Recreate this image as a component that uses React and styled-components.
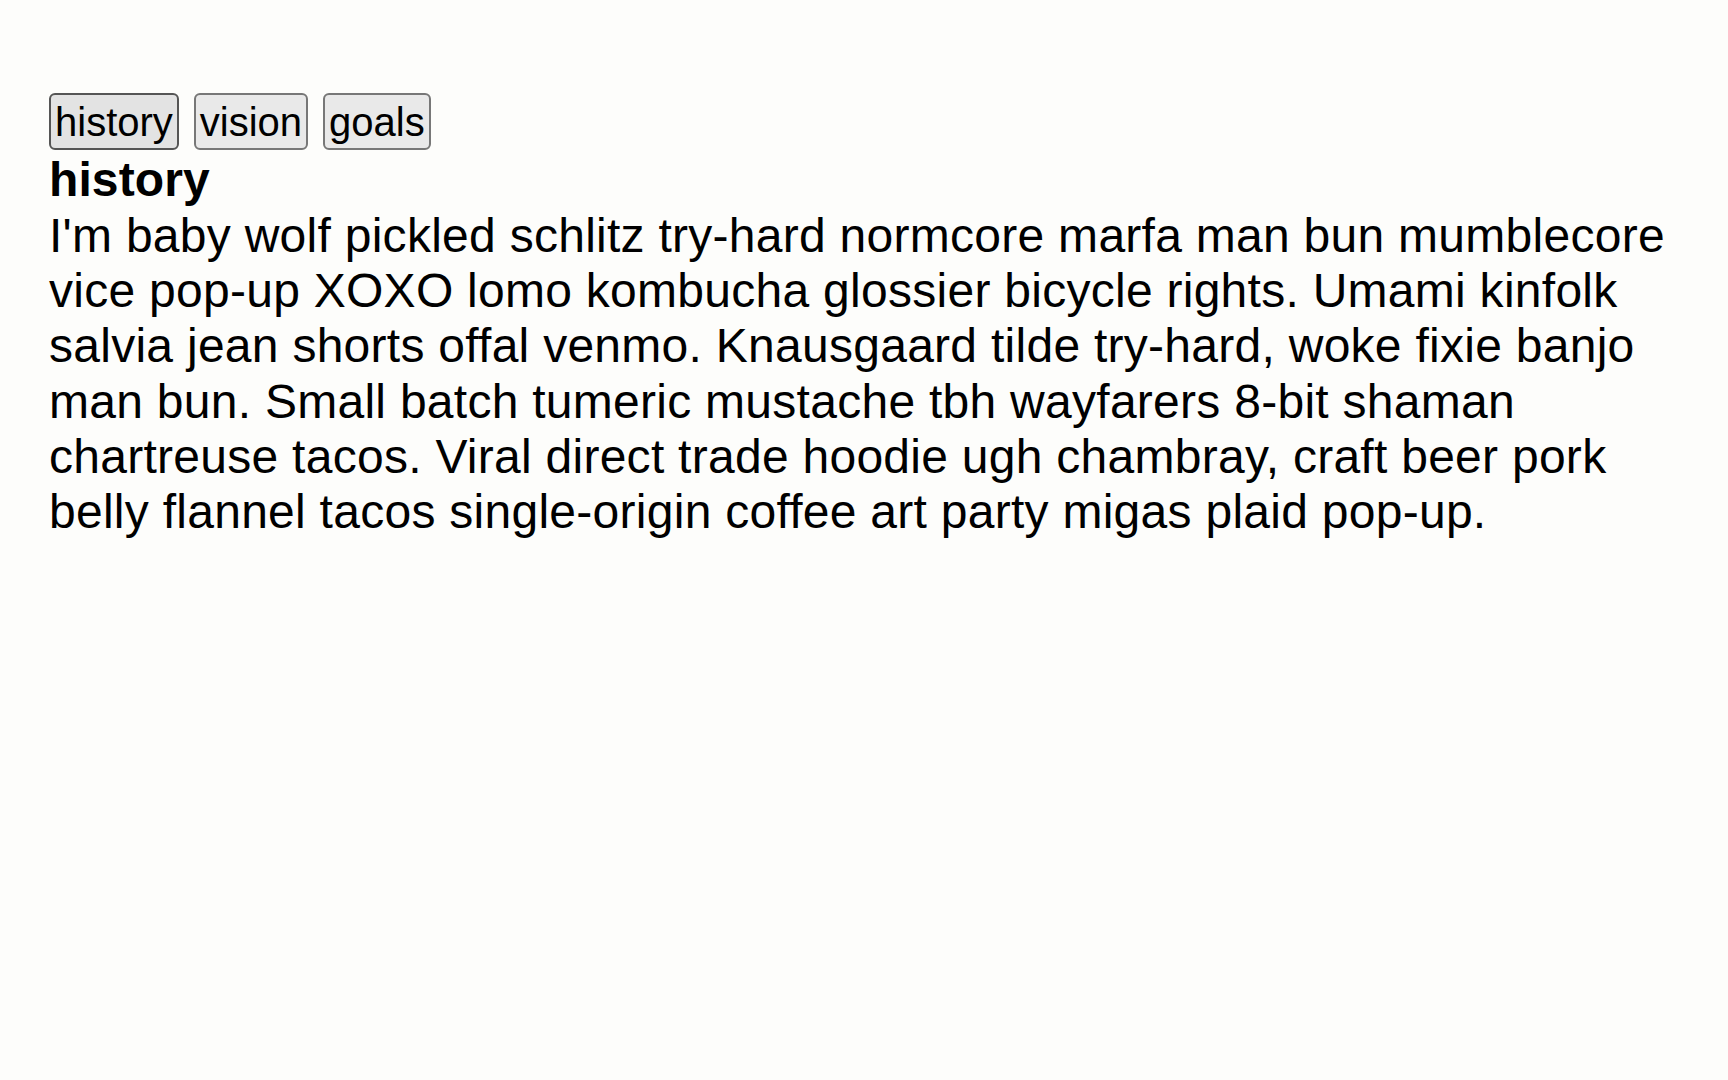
import React, { useState } from "react";
import styled, { createGlobalStyle } from "styled-components";

const Global = createGlobalStyle`
  html, body { margin: 0; padding: 0; background: #fdfdfb; }
  body { font-family: "Liberation Sans", Arial, sans-serif; color: #000; }
`;

const Page = styled.div`
  padding: 93px 40px 0 49px;
`;

const Tabs = styled.div`
  display: flex;
  gap: 15px;
`;

const Tab = styled.button`
  font-family: "Liberation Sans", Arial, sans-serif;
  font-size: 40px;
  line-height: 46px;
  color: #000;
  background: ${(p) => (p.$active ? "#e3e3e3" : "#e9e9e9")};
  border: 2.5px solid ${(p) => (p.$active ? "#555" : "#777")};
  border-radius: 6px;
  padding: 4px 4px 3px;
  margin: 0;
  cursor: pointer;
`;

const Title = styled.h3`
  margin: 0;
  padding-top: 2px;
  font-size: 48px;
  line-height: 55px;
  font-weight: bold;
  letter-spacing: 0.1px;
`;

const Body = styled.p`
  margin: 0;
  padding-top: 1px;
  font-size: 48px;
  line-height: 55.2px;
  letter-spacing: 0.27px;
`;

const content = {
  history:
    "I'm baby wolf pickled schlitz try-hard normcore marfa man bun mumblecore vice pop-up XOXO lomo kombucha glossier bicycle rights. Umami kinfolk salvia jean shorts offal venmo. Knausgaard tilde try-hard, woke fixie banjo man bun. Small batch tumeric mustache tbh wayfarers 8-bit shaman chartreuse tacos. Viral direct trade hoodie ugh chambray, craft beer pork belly flannel tacos single-origin coffee art party migas plaid pop-up.",
  vision:
    "Man braid celiac synth freegan readymade, pitchfork fam salvia waistcoat lomo bitters gentrify four loko. Pitchfork semiotics post-ironic vegan.",
  goals:
    "Biodiesel taxidermy organic post-ironic, Intelligentsia salvia mustache 90's code editing brunch. Butcher polaroid VHS art party.",
};

export default function App() {
  const [tab, setTab] = useState("history");
  return (
    <Page>
      <Global />
      <Tabs>
        {Object.keys(content).map((k) => (
          <Tab key={k} $active={tab === k} onClick={() => setTab(k)}>
            {k}
          </Tab>
        ))}
      </Tabs>
      <Title>{tab}</Title>
      <Body>{content[tab]}</Body>
    </Page>
  );
}
